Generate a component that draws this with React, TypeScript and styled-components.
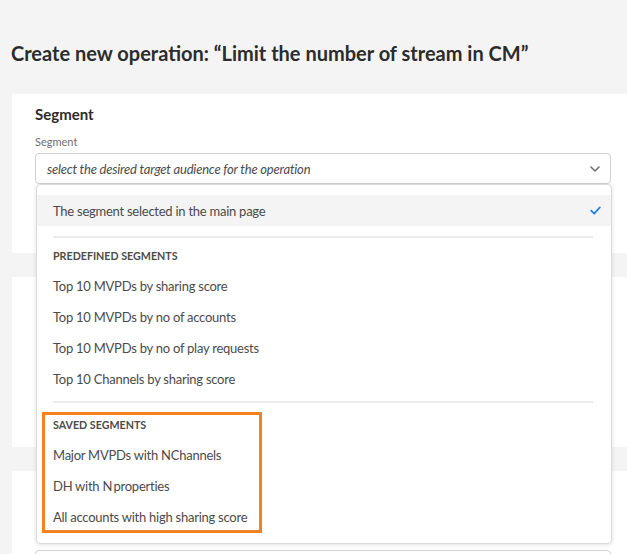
import React from "react";
import styled, { createGlobalStyle } from "styled-components";

const GlobalStyle = createGlobalStyle`
  html, body {
    margin: 0;
    padding: 0;
    background: #f4f4f4;
    overflow: hidden;
  }
  body {
    font-family: Lato, "Open Sans", sans-serif;
    color: #4b4b4b;
  }
  * { box-sizing: border-box; }
`;

const Page = styled.div`
  width: 627px;
  height: 554px;
  overflow: hidden;
  padding-top: 39px;
`;

const Title = styled.h1`
  margin: 0 0 27px 11px;
  font-size: 20px;
  line-height: 28px;
  font-weight: 700;
  color: #2c2c2c;
  white-space: nowrap;
`;

const Stack = styled.div`
  display: flex;
  flex-direction: column;
  gap: 24px;
  margin-left: 12px;
  width: 640px;
`;

const Card = styled.section<{ $h?: number }>`
  background: #ffffff;
  padding: 10px 0 0 23px;
  display: flex;
  flex-direction: column;
  flex: none;
  height: ${(p) => (p.$h ? `${p.$h}px` : "auto")};
`;

const CardHeading = styled.h2`
  margin: 0;
  font-size: 15px;
  line-height: 20px;
  font-weight: 700;
  color: #2c2c2c;
`;

const FieldLabel = styled.label`
  display: block;
  margin-top: 10px;
  font-size: 11px;
  line-height: 16px;
  color: #6e6e6e;
`;

const Field = styled.div<{ $mt?: number }>`
  position: relative;
  width: 576px;
  margin-top: ${(p) => p.$mt ?? 3}px;
`;

const SelectBox = styled.div`
  height: 31px;
  border: 1px solid #d0d0d0;
  border-radius: 4px;
  background: #fff;
  display: flex;
  align-items: center;
  justify-content: space-between;
  padding: 0 10px 0 11px;
`;

const Placeholder = styled.span`
  font-size: 13px;
  font-style: italic;
  letter-spacing: -0.2px;
  color: #4b4b4b;
`;

const Chevron = styled.svg`
  width: 10px;
  height: 6px;
  color: #6e6e6e;
`;

const Menu = styled.div`
  position: absolute;
  top: 31px;
  left: 1px;
  right: -1px;
  z-index: 5;
  background: #fff;
  border: 1px solid #dadada;
  border-radius: 4px;
  box-shadow: 0 1px 4px rgba(0, 0, 0, 0.12);
  padding: 10px 0 11px;
`;

const Item = styled.div<{ $selected?: boolean }>`
  height: 31px;
  display: flex;
  align-items: center;
  justify-content: space-between;
  padding: 0 10px 0 16px;
  font-size: 13px;
  letter-spacing: -0.25px;
  color: #4b4b4b;
  background: ${(p) => (p.$selected ? "#f4f4f4" : "transparent")};
`;

const Check = styled.svg`
  width: 11px;
  height: 9px;
  color: #2680eb;
`;

const Divider = styled.hr<{ $mt: number }>`
  border: 0;
  height: 2px;
  background: #ececec;
  margin: ${(p) => p.$mt}px 18px 0 16px;
`;

const SectionHeader = styled.div<{ $pt: number }>`
  padding: ${(p) => p.$pt}px 16px 6px;
  font-size: 10.7px;
  line-height: 16px;
  font-weight: 700;
  color: #4b4b4b;
  text-transform: uppercase;
`;

const Highlight = styled.div`
  position: absolute;
  left: 5px;
  top: 227px;
  width: 220px;
  height: 121px;
  border: 3px solid #f58220;
  pointer-events: none;
`;

const predefined = [
  "Top 10 MVPDs by sharing score",
  "Top 10 MVPDs by no of accounts",
  "Top 10 MVPDs by no of play requests",
  "Top 10 Channels by sharing score",
];

const saved = [
  "Major MVPDs with NChannels",
  "DH with N\u2009properties",
  "All accounts with high sharing score",
];

export default function App() {
  return (
    <>
      <GlobalStyle />
      <Page>
        <Title>Create new operation: “Limit the number of stream in CM”</Title>
        <Stack>
          <Card $h={159}>
            <CardHeading>Segment</CardHeading>
            <FieldLabel>Segment</FieldLabel>
            <Field>
              <SelectBox>
                <Placeholder>select the desired target audience for the operation</Placeholder>
                <Chevron viewBox="0 0 10 6" fill="none">
                  <path d="M1 1l4 4 4-4" stroke="currentColor" strokeWidth="1.6" strokeLinecap="round" strokeLinejoin="round" />
                </Chevron>
              </SelectBox>
              <Menu>
                <Item $selected>
                  <span>The segment selected in the main page</span>
                  <Check viewBox="0 0 11 9" fill="none">
                    <path d="M1.2 4.6l3 3L9.8 1.4" stroke="currentColor" strokeWidth="1.8" strokeLinecap="round" strokeLinejoin="round" />
                  </Check>
                </Item>
                <Divider $mt={10} />
                <SectionHeader $pt={10}>Predefined segments</SectionHeader>
                {predefined.map((t) => (
                  <Item key={t}>{t}</Item>
                ))}
                <Divider $mt={7} />
                <SectionHeader $pt={14}>Saved segments</SectionHeader>
                {saved.map((t) => (
                  <Item key={t}>{t}</Item>
                ))}
                <Highlight />
              </Menu>
            </Field>
          </Card>
          <Card $h={170} />
          <Card $h={120}>
            <Field $mt={69}>
              <SelectBox />
            </Field>
          </Card>
        </Stack>
      </Page>
    </>
  );
}
